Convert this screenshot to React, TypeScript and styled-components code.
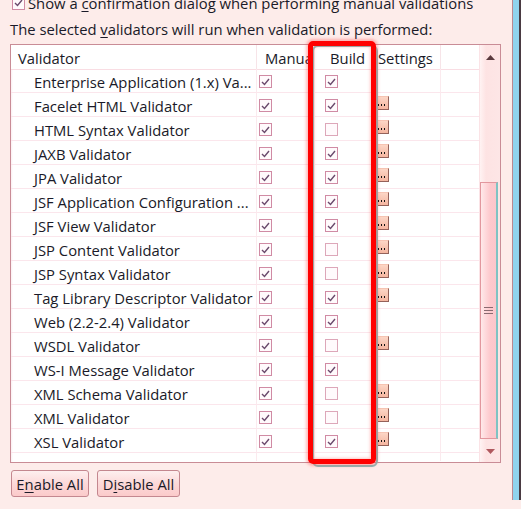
import React from "react";
import styled, { createGlobalStyle } from "styled-components";

const Global = createGlobalStyle`
  html, body { margin: 0; padding: 0; background: #fdecea; overflow: hidden; }
  body { font-family: "Open Sans", "Noto Sans", sans-serif; font-size: 14.8px; color: #1a1a28; }
`;

const Page = styled.div`
  display: flex;
  width: 521px;
  height: 509px;
  position: relative;
`;

const Content = styled.div`
  flex: 1;
  display: flex;
  flex-direction: column;
  padding-left: 10px;
  margin-top: -9px;
`;

const OuterScroll = styled.div`
  width: 9px;
  display: flex;
  flex-direction: column;
`;

const OuterThumb = styled.div`
  height: 500px;
  border-left: 1px solid #b98891;
  border-right: 2px solid #4a3a42;
  background: #8fd3ee;
  box-sizing: border-box;
`;

const OptionLine = styled.div`
  height: 24px;
  display: flex;
  align-items: center;
  gap: 3px;
  padding-left: 2px;
  white-space: nowrap;
`;

const InfoLine = styled.div`
  height: 20px;
  margin-top: 4px;
  line-height: 20px;
  white-space: nowrap;
`;

const U = styled.span`
  text-decoration: underline;
  text-underline-offset: 2px;
`;

const TableFrame = styled.div`
  margin-top: 5px;
  width: 491px;
  height: 419px;
  box-sizing: border-box;
  border: 1px solid #c98c96;
  display: flex;
  background: #fff;
`;

const Grid = styled.div`
  flex: 1;
  display: grid;
  grid-template-columns: 246px 58px 58px 68px 39px;
  grid-auto-rows: 24px;
  overflow: hidden;
  background: linear-gradient(to right, #fbeef1 0, #fff 2px);
`;

const HeadCell = styled.div<{ $pad: number }>`
  height: 25px;
  box-sizing: border-box;
  padding-left: ${(p) => p.$pad}px;
  padding-top: 2px;
  display: flex;
  align-items: center;
  border-right: 1px solid #f7e4e8;
  border-bottom: 1px solid #f9dde3;
  background: #fff;
  white-space: nowrap;
  overflow: hidden;
`;

const Cell = styled.div<{ $pad?: number }>`
  box-sizing: border-box;
  height: 24px;
  padding-left: ${(p) => p.$pad ?? 2}px;
  padding-top: 2px;
  display: flex;
  align-items: center;
  border-right: 1px solid #fbeaee;
  border-bottom: 1px solid #fbe6ec;
  white-space: nowrap;
  overflow: hidden;
`;

const PartialCell = styled(Cell)`
  height: 8px;
  border-bottom: none;
`;

const Box = styled.span<{ $on: boolean }>`
  width: 13px;
  height: 13px;
  box-sizing: border-box;
  border: 1px solid ${(p) => (p.$on ? "#d08ba4" : "#dda7b9")};
  background: #fffafc;
  display: inline-flex;
  align-items: center;
  justify-content: center;
  flex: none;
`;

const SettingsBtn = styled.span`
  width: 15px;
  height: 14px;
  margin-top: -5px;
  box-sizing: border-box;
  background: linear-gradient(#fcd6c6, #f5b6a0);
  border-right: 1px solid #94625a;
  border-bottom: 1px solid #94625a;
  border-top: 1px solid #f6c4b3;
  border-left: 1px solid #f0b2a0;
  display: flex;
  align-items: flex-end;
  justify-content: center;
  gap: 2px;
  padding-bottom: 3px;
`;

const Dot = styled.span`
  width: 1px;
  height: 2px;
  background: #111;
`;

const VScroll = styled.div`
  width: 20px;
  display: flex;
  flex-direction: column;
  background: linear-gradient(to right, #fff3f3 0, #fde3e3 6px, #fde6e6 100%);
  border-left: 1px solid #fbe3e6;
`;

const ArrowBtn = styled.div`
  height: 24px;
  display: flex;
  align-items: center;
  justify-content: center;
  flex: none;
`;

const Track = styled.div`
  flex: 1;
  display: flex;
  flex-direction: column;
  padding-top: 113px;
`;

const Thumb = styled.div`
  height: 257px;
  margin-right: 2px;
  box-sizing: border-box;
  border: 1px solid #e2979e;
  border-right: 2px solid #7fc3c3;
  background: linear-gradient(to right, #ffe9ea, #fdc9cd 60%, #fcc6cb);
  display: flex;
  align-items: center;
  justify-content: center;
`;

const Buttons = styled.div`
  display: flex;
  gap: 8px;
  margin-top: 7px;
  padding-left: 1px;
`;

const Btn = styled.button<{ $w: number }>`
  width: ${(p) => p.$w}px;
  height: 27px;
  box-sizing: border-box;
  border: 1px solid #c4878f;
  border-radius: 3px;
  background: linear-gradient(#feefef, #fcd9d9 50%, #fbcaca);
  font-family: inherit;
  font-size: 14.8px;
  color: #1a1a28;
  padding: 0;
  display: flex;
  align-items: center;
  justify-content: center;
`;

const Highlight = styled.div`
  position: absolute;
  left: 308px;
  top: 41px;
  width: 68px;
  height: 423px;
  box-sizing: border-box;
  border: 5px solid #ff0000;
  border-radius: 5px;
  box-shadow: 0 0 3px 2px rgba(255, 60, 60, 0.35), inset 0 0 3px 1px rgba(255, 60, 60, 0.3);
  pointer-events: none;
`;

const HighlightShadow = styled.div`
  position: absolute;
  left: 312px;
  top: 45px;
  width: 66px;
  height: 422px;
  box-sizing: border-box;
  border: 2px solid #84c0be;
  border-radius: 6px;
  pointer-events: none;
`;

const Check = () => (
  <svg width="9" height="8" viewBox="0 0 9 8">
    <path d="M1 4 L3.5 6.5 L8 1" fill="none" stroke="#6a4a6c" strokeWidth="1.4" />
  </svg>
);

const CheckBox = ({ on }: { on: boolean }) => <Box $on={on}>{on && <Check />}</Box>;

type Row = { name: string; build: boolean; settings: boolean };

const rows: Row[] = [
  { name: "Enterprise Application (1.x) Va...", build: true, settings: false },
  { name: "Facelet HTML Validator", build: true, settings: true },
  { name: "HTML Syntax Validator", build: false, settings: true },
  { name: "JAXB Validator", build: true, settings: true },
  { name: "JPA Validator", build: true, settings: true },
  { name: "JSF Application Configuration ...", build: true, settings: true },
  { name: "JSF View Validator", build: true, settings: true },
  { name: "JSP Content Validator", build: false, settings: true },
  { name: "JSP Syntax Validator", build: false, settings: true },
  { name: "Tag Library Descriptor Validator", build: true, settings: true },
  { name: "Web (2.2-2.4) Validator", build: true, settings: false },
  { name: "WSDL Validator", build: false, settings: true },
  { name: "WS-I Message Validator", build: true, settings: false },
  { name: "XML Schema Validator", build: false, settings: true },
  { name: "XML Validator", build: false, settings: true },
  { name: "XSL Validator", build: true, settings: true },
];

export default function App() {
  return (
    <Page>
      <Global />
      <Content>
        <OptionLine>
          <CheckBox on={true} />
          <span>
            Show a <U>c</U>onfirmation dialog when performing manual validations
          </span>
        </OptionLine>
        <InfoLine>
          The selected <U>v</U>alidators will run when validation is performed:
        </InfoLine>
        <TableFrame>
          <Grid>
            <HeadCell $pad={7}>Validator</HeadCell>
            <HeadCell $pad={8}>Manual</HeadCell>
            <HeadCell $pad={15}>Build</HeadCell>
            <HeadCell $pad={5}>Settings</HeadCell>
            <HeadCell $pad={0} />
            {rows.map((r) => (
              <React.Fragment key={r.name}>
                <Cell $pad={23}>{r.name}</Cell>
                <Cell $pad={2}>
                  <CheckBox on={true} />
                </Cell>
                <Cell $pad={10}>
                  <CheckBox on={r.build} />
                </Cell>
                <Cell $pad={1}>
                  {r.settings && (
                    <SettingsBtn>
                      <Dot />
                      <Dot />
                      <Dot />
                    </SettingsBtn>
                  )}
                </Cell>
                <Cell />
              </React.Fragment>
            ))}
            <PartialCell />
            <PartialCell />
            <PartialCell />
            <PartialCell />
            <PartialCell />
          </Grid>
          <VScroll>
            <ArrowBtn>
              <svg width="9" height="5" viewBox="0 0 9 5">
                <path d="M0 5 L4.5 0 L9 5 Z" fill="#5a3a3e" />
              </svg>
            </ArrowBtn>
            <Track>
              <Thumb>
                <svg width="9" height="8" viewBox="0 0 9 8">
                  <path d="M0 0.5 H9 M0 3.5 H9 M0 6.5 H9" stroke="#8a6a70" strokeWidth="1" />
                </svg>
              </Thumb>
            </Track>
            <ArrowBtn>
              <svg width="9" height="5" viewBox="0 0 9 5">
                <path d="M0 0 L9 0 L4.5 5 Z" fill="#b0585e" />
              </svg>
            </ArrowBtn>
          </VScroll>
        </TableFrame>
        <Buttons>
          <Btn $w={78}>
            <span>
              E<U>n</U>able All
            </span>
          </Btn>
          <Btn $w={83}>
            <span>
              D<U>i</U>sable All
            </span>
          </Btn>
        </Buttons>
      </Content>
      <OuterScroll>
        <OuterThumb />
      </OuterScroll>
      <HighlightShadow />
      <Highlight />
    </Page>
  );
}
